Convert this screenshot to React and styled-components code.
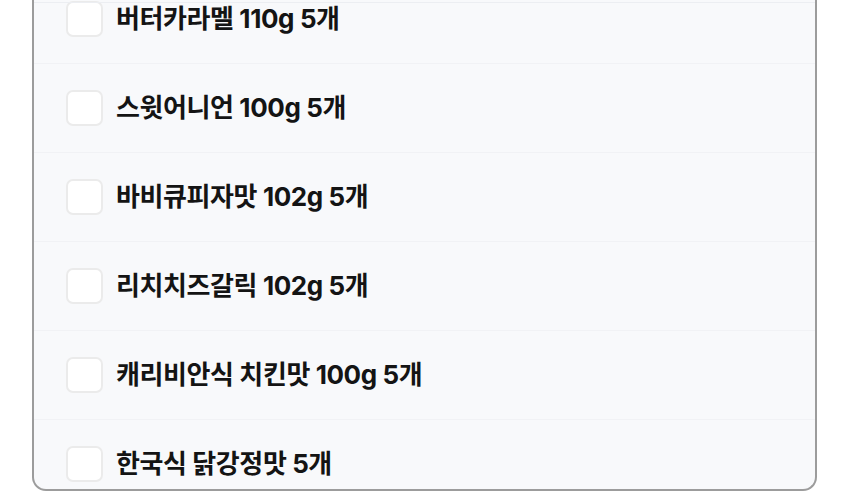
import React from 'react';
import styled, {createGlobalStyle} from 'styled-components';

const items = [
	'버터카라멜 110g 5개',
	'스윗어니언 100g 5개',
	'바비큐피자맛 102g 5개',
	'리치치즈갈릭 102g 5개',
	'캐리비안식 치킨맛 100g 5개',
	'한국식 닭강정맛 5개',
];

const GlobalStyle = createGlobalStyle`
	html, body {
		margin: 0;
		background: #ffffff;
	}
	body {
		font-family: Inter, 'Noto Sans CJK KR', sans-serif;
		overflow: hidden;
	}
`;

const App = () => {
	return (
		<>
			<GlobalStyle />
			<Page>
				<Panel>
					<List>
						{items.map((name) => (
							<Row key={name}>
								<Check type="checkbox" />
								<Label>{name}</Label>
							</Row>
						))}
					</List>
				</Panel>
			</Page>
		</>
	);
};

const Page = styled.div`
	width: 850px;
	height: 494px;
	padding: 0 33px 0 32px;
	box-sizing: border-box;
	overflow: hidden;
`;

const Panel = styled.div`
	height: 491px;
	box-sizing: border-box;
	background: #f8f9fb;
	border: 2px solid #9c9c9c;
	border-top: none;
	border-radius: 0 0 14px 14px;
	overflow: hidden;
	position: relative;
	&::before {
		content: '';
		position: absolute;
		left: 0;
		right: 0;
		top: 2px;
		height: 1px;
		background: #eceef2;
	}
`;

const List = styled.ul`
	list-style: none;
	margin: -25px 0 0;
	padding: 0;
`;

const Row = styled.li`
	height: 88px;
	display: flex;
	align-items: center;
	gap: 13px;
	padding-left: 32px;
	border-bottom: 1px solid #f1f2f5;
`;

const Check = styled.input`
	appearance: none;
	margin: 0;
	width: 37px;
	height: 36px;
	box-sizing: border-box;
	background: #ffffff;
	border: 2px solid #ebebeb;
	border-radius: 7px;
	flex-shrink: 0;
`;

const Label = styled.span`
	font-size: 26px;
	font-weight: 700;
	color: #141414;
	letter-spacing: -0.4px;
	line-height: 1;
`;

export default App;
